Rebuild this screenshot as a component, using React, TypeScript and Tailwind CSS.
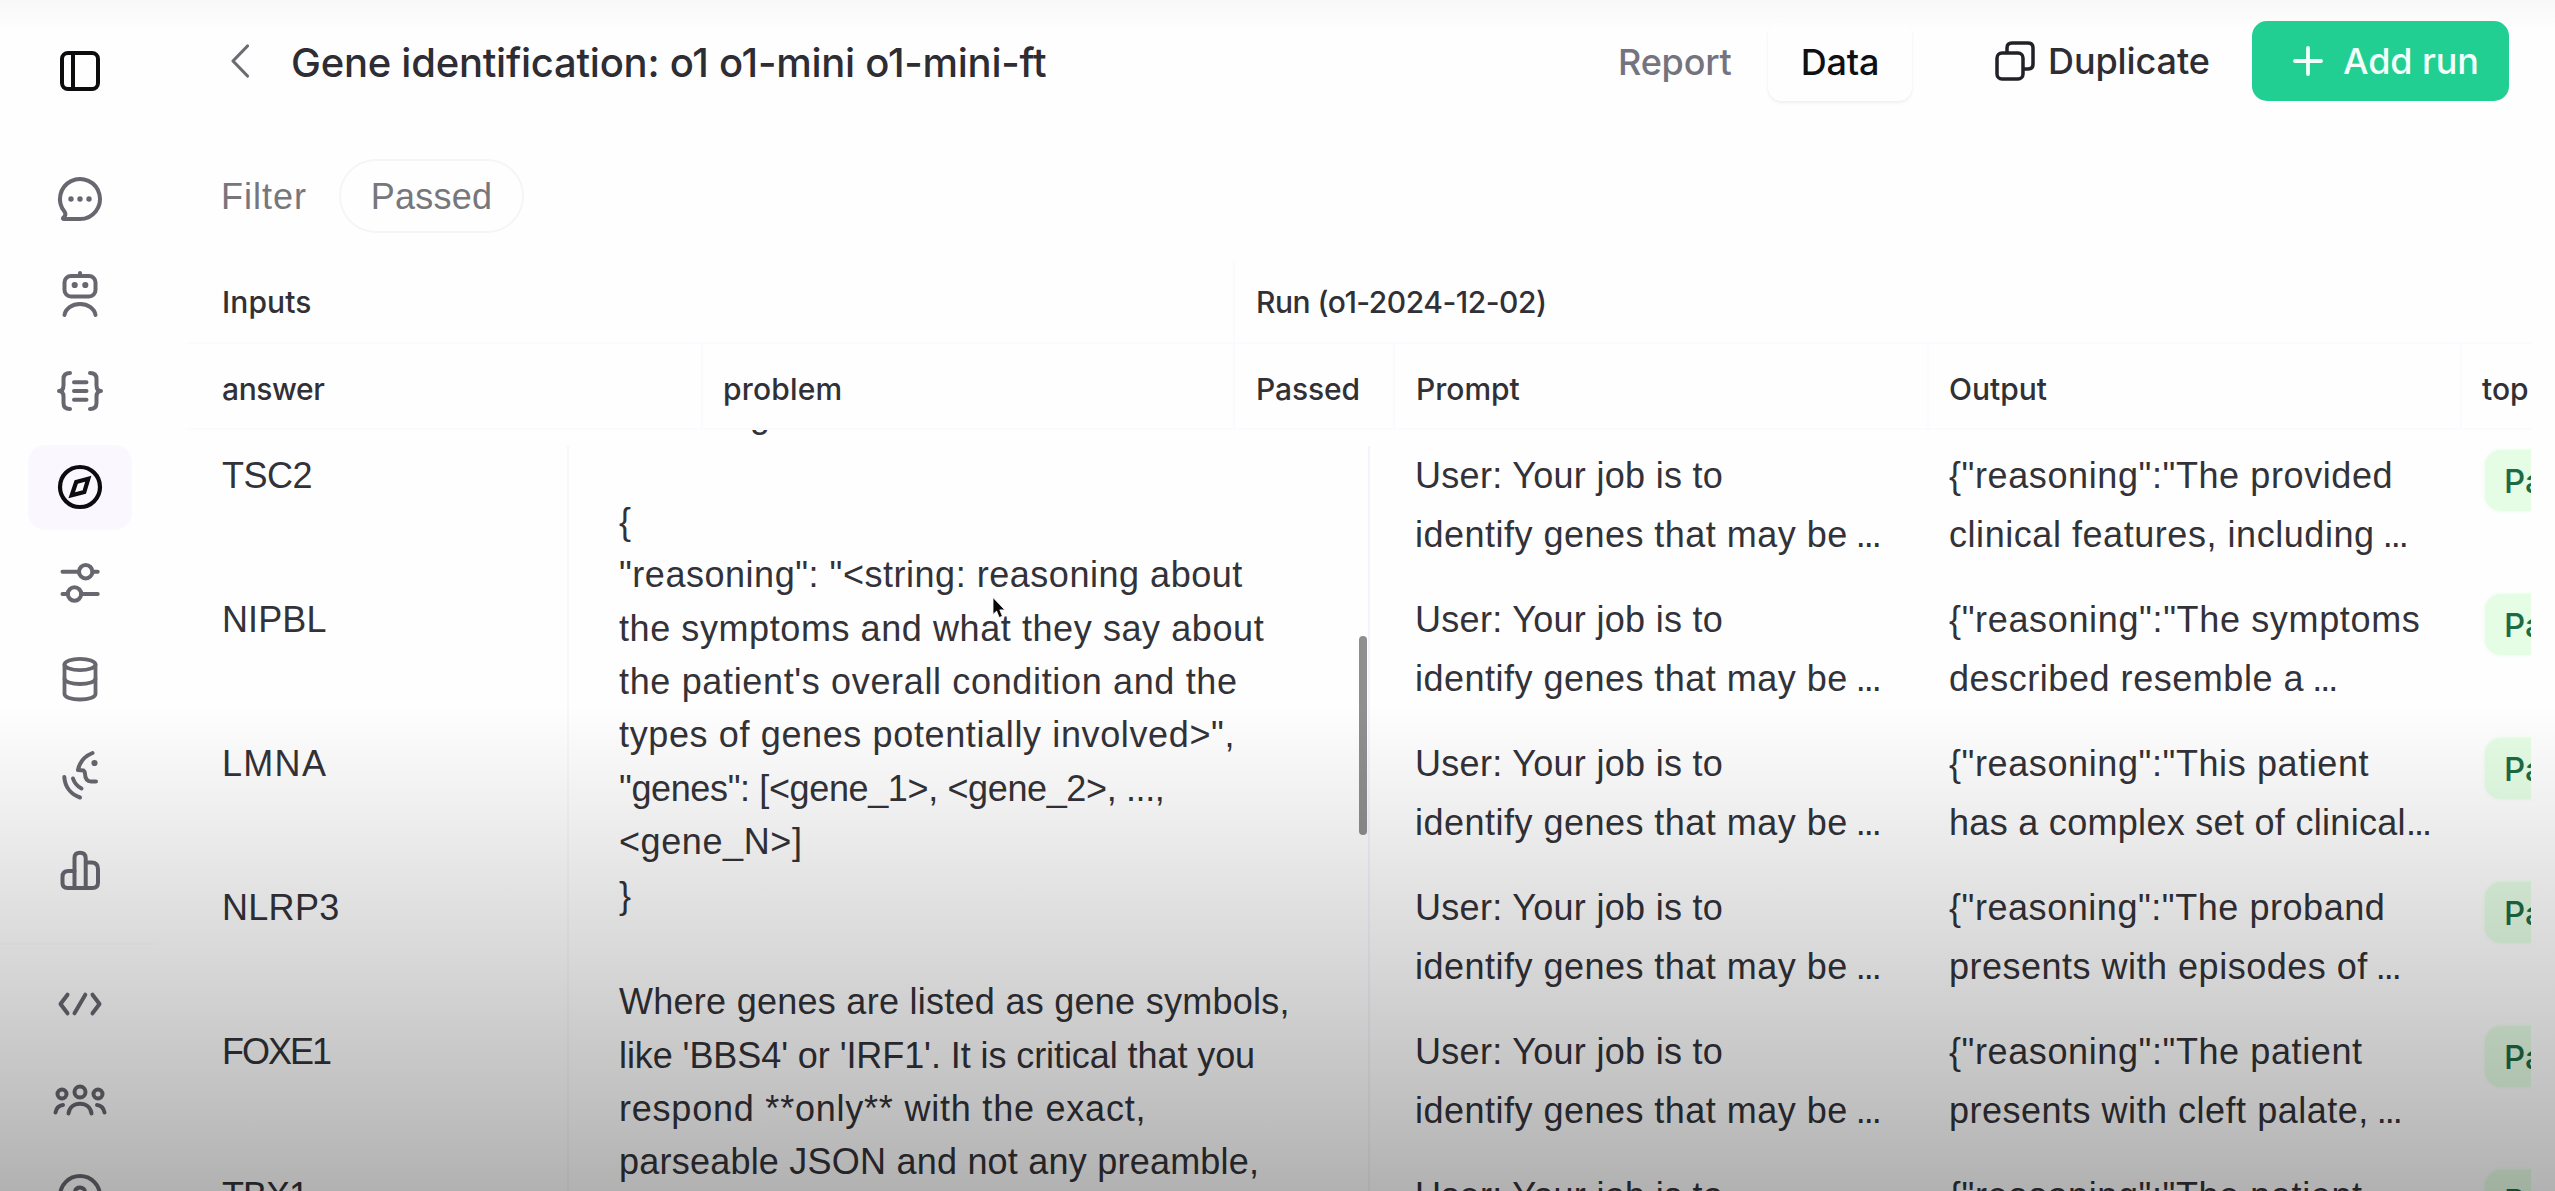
import React from "react";

type IconProps = { children: React.ReactNode; className?: string; sw?: number };

function Icon({ children, className = "text-[#68666f]", sw = 4 }: IconProps) {
  return (
    <svg
      width="56"
      height="56"
      viewBox="0 0 56 56"
      fill="none"
      stroke="currentColor"
      strokeWidth={sw}
      strokeLinecap="round"
      strokeLinejoin="round"
      className={className}
    >
      {children}
    </svg>
  );
}

function NavItem({ children, active }: { children: React.ReactNode; active?: boolean }) {
  return (
    <div className="flex h-24 w-40 shrink-0 items-center justify-center">
      <div
        className={
          active
            ? "flex h-[85px] w-[104px] items-center justify-center rounded-[18px] bg-[#faf8fe]"
            : "flex h-[85px] w-[104px] items-center justify-center"
        }
      >
        {children}
      </div>
    </div>
  );
}

function Sidebar() {
  return (
    <nav className="flex h-full w-[186px] shrink-0 flex-col pt-[23px]">
      <NavItem>
        <Icon className="text-[#0c0c0e]">
          <rect x="10" y="10" width="36" height="36" rx="6" />
          <path d="M21 10v36" />
        </Icon>
      </NavItem>
      <div className="h-8 shrink-0" />
      <NavItem>
        <Icon>
          <path d="M28 48A20 20 0 1 0 12.6 40.8c1 1.6 1 3.1.2 4.4l-1.6 1.6q-.9 1.2.8 1.2z" />
          <g fill="currentColor" stroke="none">
            <circle cx="19" cy="28" r="2.7" />
            <circle cx="28" cy="28" r="2.7" />
            <circle cx="37" cy="28" r="2.7" />
          </g>
        </Icon>
      </NavItem>
      <NavItem>
        <Icon>
          <path d="M28 6v3" />
          <rect x="12.5" y="9" width="31" height="20.5" rx="6.5" />
          <circle cx="22.7" cy="18" r="3.1" fill="currentColor" stroke="none" />
          <circle cx="33.3" cy="18" r="3.1" fill="currentColor" stroke="none" />
          <path d="M12.5 48C13.5 41.5 20 37 28 37s14.5 4.5 15.5 11" />
        </Icon>
      </NavItem>
      <NavItem>
        <Icon>
          <path d="M18 10c-5 0-6.500 2.500-6.500 6v6c0 3.500-1 6-4.500 6 3.500 0 4.500 2.500 4.500 6v6c0 3.500 1.500 6 6.500 6" />
          <path d="M38 10c5 0 6.500 2.500 6.500 6v6c0 3.500 1 6 4.500 6-3.500 0-4.500 2.500-4.500 6v6c0 3.500-1.500 6-6.500 6" />
          <path d="M22 19.300h12.500M22 28h12.500M22 36.700h12.500" />
        </Icon>
      </NavItem>
      <NavItem active>
        <Icon className="text-[#0c0c0e]" sw={4.2}>
          <circle cx="28" cy="28" r="20" />
          <path d="M36.300 19.700 24.200 23 19.700 36.300 32.300 33z" strokeLinejoin="miter" />
        </Icon>
      </NavItem>
      <NavItem>
        <Icon>
          <circle cx="33.700" cy="16.700" r="6.700" />
          <path d="M10.500 16.700H27M40.400 16.700h5.300" />
          <circle cx="22.500" cy="39" r="6.700" />
          <path d="M10.500 39h5.300M29.200 39h16.500" />
        </Icon>
      </NavItem>
      <NavItem>
        <Icon sw={3.8}>
          <ellipse cx="28" cy="13.500" rx="15.500" ry="5.700" />
          <path d="M12.500 13.500v29.500c0 3.300 7 5.500 15.500 5.500s15.500-2.200 15.500-5.500V13.500" />
          <path d="M12.500 27.500c0 3.300 7 5.500 15.500 5.500s15.500-2.200 15.500-5.500" />
        </Icon>
      </NavItem>
      <NavItem>
        <Icon>
          <path d="M40.500 6C32 9.500 27.500 15.500 26 23l5.500.5c.8.500 1.300 1.500 1.400 2.500.2 5 1.600 8.500 6.100 8.500h5" />
          <circle cx="42.500" cy="16" r="3.100" fill="currentColor" stroke="none" />
          <path d="M21 31.500c1.300 4.300 4.300 7.800 8.500 10" />
          <path d="M12.300 30c.7 10 6.700 17.500 15.700 20.500" />
        </Icon>
      </NavItem>
      <NavItem>
        <Icon>
          <path d="M22.500 28h-6q-6 0-6 6v6q0 5 5 5h25q5.500 0 5.500-5.500V26q0-6.600-6.600-6.600H34" />
          <path d="M22.500 45V15q0-5.300 5.500-5.300t5.700 5.300v30" />
        </Icon>
      </NavItem>
      <div className="mt-[24px] mb-[11px] h-[2px] w-[158px] shrink-0 bg-[#fef9ff]" />
      <NavItem>
        <Icon>
          <path d="M15.500 18.700 8.500 28l7 9.300M40.500 18.700l7 9.300-7 9.300M33.300 18.700 22.500 37.300" />
        </Icon>
      </NavItem>
      <NavItem>
        <Icon>
          <circle cx="28" cy="20" r="5.500" />
          <circle cx="10" cy="22" r="4.500" />
          <circle cx="46" cy="22" r="4.500" />
          <path d="M16.500 41.500c.8-6 5.500-9.700 11.500-9.700s10.700 3.700 11.500 9.700" />
          <path d="M3.500 40.500c.7-4 3.200-7 7.500-7.500M52.500 40.500c-.7-4-3.200-7-7.500-7.500" />
        </Icon>
      </NavItem>
      <NavItem>
        <Icon>
          <circle cx="28" cy="28" r="20" />
          <path d="M23 23.500c.5-2.400 2.400-4 5-4 2.800 0 5 1.800 5 4.400 0 3.600-5 3.800-5 7.600" />
        </Icon>
      </NavItem>
    </nav>
  );
}

function Header() {
  return (
    <header className="flex h-[121px] shrink-0 items-center pr-[46px] font-[Inter,sans-serif] font-medium whitespace-nowrap">
      <svg width="20" height="36" viewBox="0 0 20 36" fill="none" className="ml-[44px] shrink-0">
        <path d="M17.500 3 3 18l14.500 15" stroke="#6c6b71" strokeWidth="3.200" strokeLinecap="round" strokeLinejoin="round" />
      </svg>
      <h1 className="ml-[41px] pt-[5px] text-[40px] tracking-[-0.25px] text-[#2e2d33]">
        Gene identification: o1 o1-mini o1-mini-ft
      </h1>
      <div className="ml-auto flex shrink-0 items-center text-[36px]">
        <div className="w-[150px] pt-[3px] tracking-[-0.2px] text-[#75737d]">Report</div>
        <div className="flex h-[81px] w-[144px] items-center justify-center rounded-[14px] bg-[#fefefe] pt-[3px] tracking-[-0.2px] text-[#101012] shadow-[0_2px_3px_rgba(70,60,80,0.08)]">
          Data
        </div>
        <svg width="40" height="40" viewBox="0 0 40 40" fill="none" stroke="#222127" strokeWidth="3.500" strokeLinecap="round" strokeLinejoin="round" className="ml-[83px]">
          <rect x="2" y="12" width="26" height="26" rx="5" />
          <path d="M12 11.500V7q0-5 5-5h16q5 0 5 5v16q0 5-5 5h-4" />
        </svg>
        <div className="w-[217px] pl-[13px] tracking-[-0.1px] text-[#2e2d33]">Duplicate</div>
        <button className="flex h-[80px] w-[257px] items-center rounded-[15px] bg-[#22cf93] text-[#f2fffa]">
          <svg width="30" height="30" viewBox="0 0 30 30" className="ml-[41px]">
            <path d="M15 2v26M2 15h26" stroke="currentColor" strokeWidth="3.800" strokeLinecap="round" />
          </svg>
          <span className="ml-[20px] tracking-[-0.1px]">Add run</span>
        </button>
      </div>
    </header>
  );
}

function Filters() {
  return (
    <div className="mt-[38px] flex h-[74px] shrink-0 items-center text-[36px] text-[#77767c]">
      <span className="w-[153px] pt-[2px] pl-[35px] tracking-[1px]">Filter</span>
      <span className="flex h-[74px] w-[185px] items-center justify-center rounded-full border-2 border-[#f7f4f9] pt-[2px] tracking-[0.2px]">
        Passed
      </span>
    </div>
  );
}

const COLS = "grid grid-cols-[515px_532px_160px_534px_533px_71px]";

type Line = { t: string; c: string; dots?: boolean; tight?: boolean };
type Row = { gene: string; geneClass: string; out: [Line, Line] };

const rows: Row[] = [
  {
    gene: "TSC2",
    geneClass: "tracking-[-0.5px]",
    out: [
      { t: '{"reasoning":"The provided', c: "tracking-[0.6px]" },
      { t: "clinical features, including", c: "tracking-[0.55px]", dots: true },
    ],
  },
  {
    gene: "NIPBL",
    geneClass: "tracking-[0.1px]",
    out: [
      { t: '{"reasoning":"The symptoms', c: "tracking-[0.65px]" },
      { t: "described resemble a", c: "tracking-[0.55px]", dots: true },
    ],
  },
  {
    gene: "LMNA",
    geneClass: "tracking-[1.3px]",
    out: [
      { t: '{"reasoning":"This patient', c: "tracking-[0.6px]" },
      { t: "has a complex set of clinical", c: "tracking-[0.3px]", dots: true, tight: true },
    ],
  },
  {
    gene: "NLRP3",
    geneClass: "tracking-[0.3px]",
    out: [
      { t: '{"reasoning":"The proband', c: "tracking-[0.55px]" },
      { t: "presents with episodes of", c: "tracking-[0.5px]", dots: true },
    ],
  },
  {
    gene: "FOXE1",
    geneClass: "tracking-[-2px]",
    out: [
      { t: '{"reasoning":"The patient', c: "tracking-[0.6px]" },
      { t: "presents with cleft palate,", c: "tracking-[0.5px]", dots: true },
    ],
  },
  {
    gene: "TBX1",
    geneClass: "tracking-[-1px]",
    out: [
      { t: '{"reasoning":"The patient', c: "tracking-[0.6px]" },
      { t: "exhibits congenital heart", c: "tracking-[0.6px]", dots: true },
    ],
  },
];

function TextLine({ line }: { line: Line }) {
  return (
    <div className="h-[59px]">
      <span className={line.c}>{line.t}</span>
      {line.dots && (
        <span className={line.tight ? "tracking-[-2px]" : "ml-[8px] tracking-[-2px]"}>...</span>
      )}
    </div>
  );
}

const problemLines: { t: string; c: string }[] = [
  { t: "following format:", c: "pl-[7px] tracking-[0.5px]" },
  { t: "", c: "" },
  { t: "{", c: "" },
  { t: '"reasoning": "<string: reasoning about', c: "tracking-[0.53px]" },
  { t: "the symptoms and what they say about", c: "tracking-[0.58px]" },
  { t: "the patient's overall condition and the", c: "tracking-[0.65px]" },
  { t: 'types of genes potentially involved>",', c: "tracking-[0.63px]" },
  { t: '"genes": [<gene_1>, <gene_2>, ...,', c: "tracking-[-0.37px]" },
  { t: "<gene_N>]", c: "tracking-[0.6px]" },
  { t: "}", c: "" },
  { t: "", c: "" },
  { t: "Where genes are listed as gene symbols,", c: "tracking-[0.27px]" },
  { t: "like 'BBS4' or 'IRF1'. It is critical that you", c: "tracking-[-0.08px]" },
  { t: "respond **only** with the exact,", c: "tracking-[0.78px]" },
  { t: "parseable JSON and not any preamble,", c: "tracking-[0.22px]" },
];

function ProblemPopover() {
  return (
    <div className="absolute top-0 bottom-0 left-[381px] w-[803px] bg-[#fefefe] text-[#333238]">
      <div className="absolute top-4 bottom-0 left-0 w-[2px] bg-[#f9f6fb]" />
      <div className="absolute top-4 right-0 bottom-0 w-[2px] bg-[#f7f2fa]" />
      <div className="-mt-[42px] pl-[52px]">
        {problemLines.map((l, i) => (
          <div key={i} className="h-[53.4px] leading-[53.4px]">
            <span className={l.c}>{l.t}</span>
          </div>
        ))}
      </div>
      <div className="absolute top-[206px] right-[3px] h-[199px] w-[8px] rounded-full bg-[#8f8e91]" />
      <svg width="16" height="24" viewBox="0 0 16 24" className="absolute top-[166px] left-[424px]">
        <path d="M2 1.500v17l3.600-3.400 2.600 6.400 3.200-1.300-2.600-6.300h5z" fill="#080808" stroke="#fff" strokeWidth="0.800" />
      </svg>
    </div>
  );
}

function Table() {
  return (
    <div className="mt-[28px] flex min-h-0 w-[2345px] flex-1 flex-col overflow-hidden">
      <div className="grid h-[83px] shrink-0 grid-cols-[1047px_1298px] border-b-2 border-[#fcfafe] font-[Inter,sans-serif] text-[30px] font-medium text-[#313037]">
        <div className="flex items-center pt-[2px] pl-[36px] tracking-[0.1px]">Inputs</div>
        <div className="flex items-center border-l-2 border-[#fcfafe] pt-[2px] pl-[21px] tracking-[-0.5px]">
          Run (o1-2024-12-02)
        </div>
      </div>
      <div className={`${COLS} h-[86px] shrink-0 border-b-2 border-[#fcfafe] font-[Inter,sans-serif] text-[30px] font-medium text-[#313037]`}>
        <div className="flex items-center pt-[7px] pl-[36px] tracking-[-0.4px]">answer</div>
        <div className="flex items-center border-l-2 border-[#fcfafe] pt-[7px] pl-[20px] tracking-[0.2px]">problem</div>
        <div className="flex items-center border-l-2 border-[#fcfafe] pt-[7px] pl-[21px] tracking-[-0.1px]">Passed</div>
        <div className="flex items-center border-l-2 border-[#fcfafe] pt-[7px] pl-[21px] tracking-[0px]">Prompt</div>
        <div className="flex items-center border-l-2 border-[#fcfafe] pt-[7px] pl-[20px] tracking-[0px]">Output</div>
        <div className="flex items-center border-l-2 border-[#fcfafe] pt-[7px] pl-[20px]">top</div>
      </div>
      <div className="relative flex-1 overflow-hidden text-[36px] whitespace-nowrap text-[#333238]">
        {rows.map((r) => (
          <div key={r.gene} className={`${COLS} h-36 pt-4 leading-[59px]`}>
            <div className={`pl-[36px] ${r.geneClass}`}>{r.gene}</div>
            <div />
            <div />
            <div className="pl-[22px]">
              <div className="h-[59px] tracking-[0.3px]">User: Your job is to</div>
              <TextLine line={{ t: "identify genes that may be", c: "tracking-[0.48px]", dots: true }} />
            </div>
            <div className="pl-[22px]">
              <TextLine line={r.out[0]} />
              <TextLine line={r.out[1]} />
            </div>
            <div className="pl-[25px]">
              <div className="mt-[4px] h-[61px] w-[140px] rounded-[16px] bg-[#e5fde5] pl-[19px] font-[Inter,sans-serif] text-[33px] leading-[62px] font-medium text-[#1d6b45] shadow-[0_0_4px_#e5fde5]">
                Passed
              </div>
            </div>
          </div>
        ))}
        <ProblemPopover />
      </div>
    </div>
  );
}

export default function App() {
  return (
    <div className="relative flex h-[1191px] w-[2555px] overflow-hidden bg-[#fefefe] font-['Liberation_Sans',sans-serif]">
      <Sidebar />
      <main className="flex h-full min-w-0 flex-1 flex-col">
        <Header />
        <Filters />
        <Table />
      </main>
      <div className="pointer-events-none absolute inset-x-0 top-0 h-[30px] bg-linear-to-b from-black/[0.025] to-transparent" />
      <div className="pointer-events-none absolute inset-x-0 top-[705px] bottom-0 bg-[linear-gradient(to_bottom,rgba(0,0,0,0)_0%,rgba(0,0,0,0.055)_20%,rgba(0,0,0,0.145)_50%,rgba(0,0,0,0.24)_81%,rgba(0,0,0,0.3)_100%)]" />
    </div>
  );
}
